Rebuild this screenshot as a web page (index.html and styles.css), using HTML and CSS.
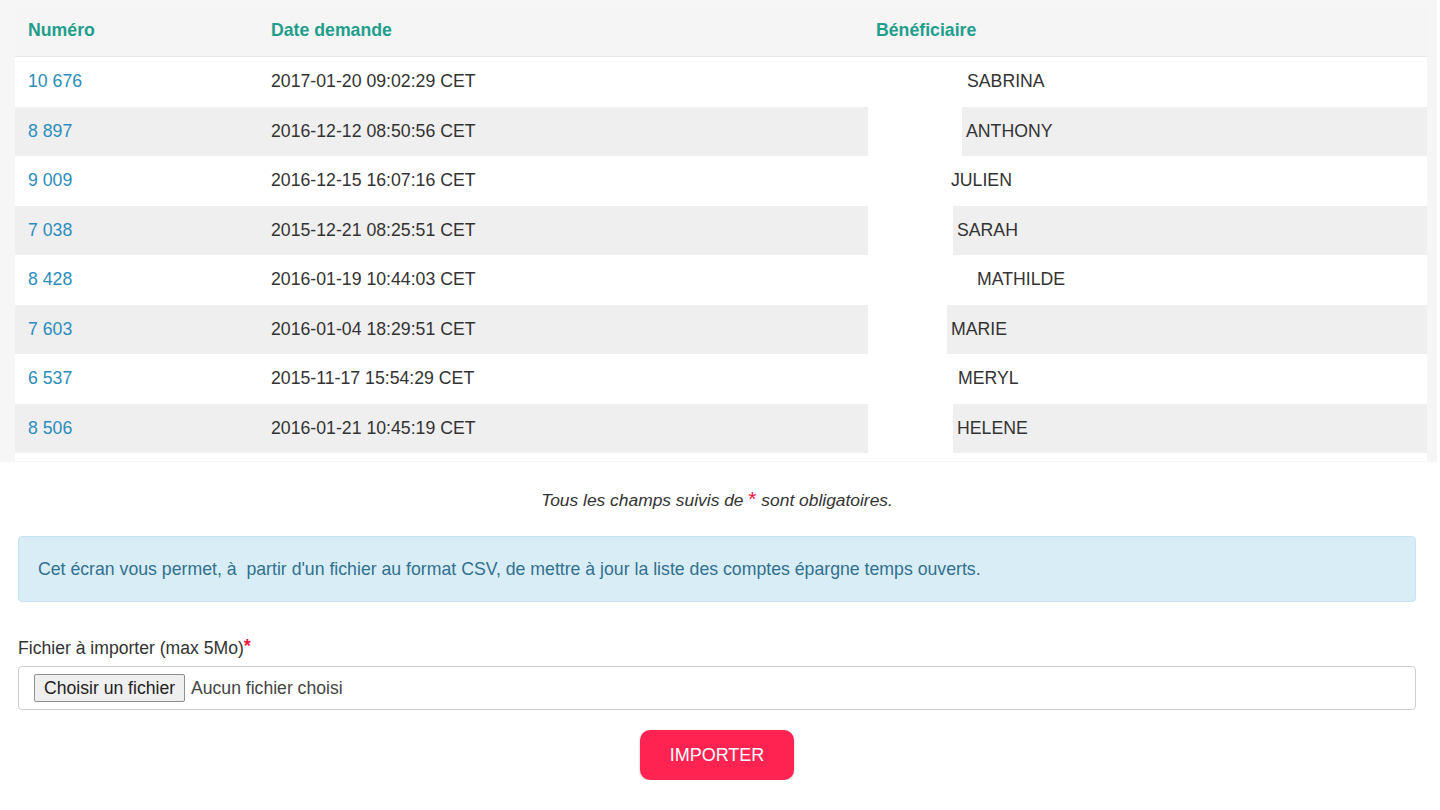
FILE: index.html
```html
<!DOCTYPE html>
<html lang="fr">
<head>
<meta charset="utf-8">
<title>Import CSV</title>
<link rel="stylesheet" href="styles.css">
</head>
<body>
<div class="table-panel">
  <table class="grid">
    <thead>
      <tr>
        <th class="c-num">Numéro</th>
        <th class="c-date">Date demande</th>
        <th class="c-ben">Bénéficiaire</th>
      </tr>
    </thead>
    <tbody>
      <tr><td><a href="#">10 676</a></td><td>2017-01-20 09:02:29 CET</td><td class="ben"><span class="mask" style="width:95px"></span><span class="name">SABRINA</span></td></tr>
      <tr><td><a href="#">8 897</a></td><td>2016-12-12 08:50:56 CET</td><td class="ben"><span class="mask" style="width:94px"></span><span class="name">ANTHONY</span></td></tr>
      <tr><td><a href="#">9 009</a></td><td>2016-12-15 16:07:16 CET</td><td class="ben"><span class="mask" style="width:79px"></span><span class="name">JULIEN</span></td></tr>
      <tr><td><a href="#">7 038</a></td><td>2015-12-21 08:25:51 CET</td><td class="ben"><span class="mask" style="width:85px"></span><span class="name">SARAH</span></td></tr>
      <tr><td><a href="#">8 428</a></td><td>2016-01-19 10:44:03 CET</td><td class="ben"><span class="mask" style="width:105px"></span><span class="name">MATHILDE</span></td></tr>
      <tr><td><a href="#">7 603</a></td><td>2016-01-04 18:29:51 CET</td><td class="ben"><span class="mask" style="width:79px"></span><span class="name">MARIE</span></td></tr>
      <tr><td><a href="#">6 537</a></td><td>2015-11-17 15:54:29 CET</td><td class="ben"><span class="mask" style="width:86px"></span><span class="name">MERYL</span></td></tr>
      <tr><td><a href="#">8 506</a></td><td>2016-01-21 10:45:19 CET</td><td class="ben"><span class="mask" style="width:85px"></span><span class="name">HELENE</span></td></tr>
      <tr class="spacer"><td></td><td></td><td></td></tr>
    </tbody>
  </table>
</div>

<div class="form-area">
  <p class="required-note">Tous les champs suivis de <span class="star">*</span> sont obligatoires.</p>

  <div class="info-box">Cet écran vous permet, à&nbsp; partir d'un fichier au format CSV, de mettre à jour la liste des comptes épargne temps ouverts.</div>

  <div class="field">
    <label class="field-label" for="fichier">Fichier à importer (max 5Mo)<span class="req">*</span></label>
    <div class="file-input">
      <span class="file-btn" id="fichier">Choisir un fichier</span>
      <span class="file-name">Aucun fichier choisi</span>
    </div>
  </div>

  <div class="actions">
    <button class="btn-import" type="button">IMPORTER</button>
  </div>
</div>
</body>
</html>
```

FILE: styles.css
```css
html, body {
  margin: 0;
  padding: 0;
  background: #ffffff;
  font-family: "Liberation Sans", Arial, sans-serif;
  color: #333333;
}

.table-panel {
  background: #f6f6f6;
  margin-right: 3px;
  padding: 6px 10px 0 15px;
  height: 456px;
  overflow: hidden;
}

.grid {
  width: 100%;
  border-collapse: collapse;
  font-size: 17.7px;
}

.grid th {
  text-align: left;
  color: #1f9e8c;
  font-weight: bold;
  height: 48px;
  padding: 0 0 2px 13px;
  background: #f5f5f5;
  border-bottom: 1px solid #e8e8e8;
}

.grid .c-num { width: 230px; }
.grid .c-date { width: 592px; }

.grid td {
  height: 49.5px;
  padding: 0 0 0 13px;
  background: #ffffff;
  color: #333333;
  white-space: nowrap;
}

.grid tbody tr:nth-child(even) td {
  background: #efefef;
}

.grid tbody tr.spacer td {
  height: 8px;
  background: #ffffff;
}

.grid td a {
  color: #2b8dbd;
  text-decoration: none;
}

.grid td.ben {
  padding-left: 5px;
}

.grid td.ben .mask {
  display: inline-block;
  height: 49.5px;
  vertical-align: middle;
  background: #ffffff;
}

.grid td.ben .name {
  vertical-align: middle;
  margin-left: 4px;
}

.form-area {
  padding: 0 24px 0 18px;
}

.required-note {
  margin: 27px 0 0;
  text-align: center;
  font-style: italic;
  font-size: 17.4px;
  line-height: 20px;
}

.required-note .star {
  color: #e8173f;
  font-size: 21px;
  font-style: normal;
}

.info-box {
  margin-top: 26px;
  background: #d9edf7;
  border: 1px solid #c6e4f2;
  border-radius: 4px;
  color: #31708f;
  font-size: 17.7px;
  height: 66px;
  display: flex;
  align-items: center;
  padding: 0 19px;
  box-sizing: border-box;
}

.field {
  margin-top: 36px;
}

.field-label {
  display: block;
  font-size: 17.6px;
  line-height: 20px;
  margin-bottom: 8px;
}

.field-label .req {
  color: #e8173f;
  vertical-align: top;
  font-size: 18px;
  font-weight: bold;
  line-height: 16px;
}

.file-input {
  height: 44px;
  border: 1px solid #cfcfcf;
  border-radius: 4px;
  box-sizing: border-box;
  display: flex;
  align-items: center;
  padding-left: 15px;
  gap: 6px;
  font-size: 17.6px;
}

.file-btn {
  display: inline-flex;
  align-items: center;
  height: 28px;
  padding: 0 9px;
  background: #efefef;
  border: 1px solid #8f8f8f;
  border-radius: 2px;
  box-sizing: border-box;
  color: #222;
}

.file-name {
  color: #444;
}

.actions {
  display: flex;
  justify-content: center;
  margin-top: 20px;
}

.btn-import {
  width: 154px;
  height: 50px;
  background: #ff2352;
  color: #ffffff;
  border: none;
  border-radius: 10px;
  font-family: "Liberation Sans", Arial, sans-serif;
  font-size: 18px;
  box-shadow: 0 1px 3px rgba(0,0,0,0.2);
}
```
